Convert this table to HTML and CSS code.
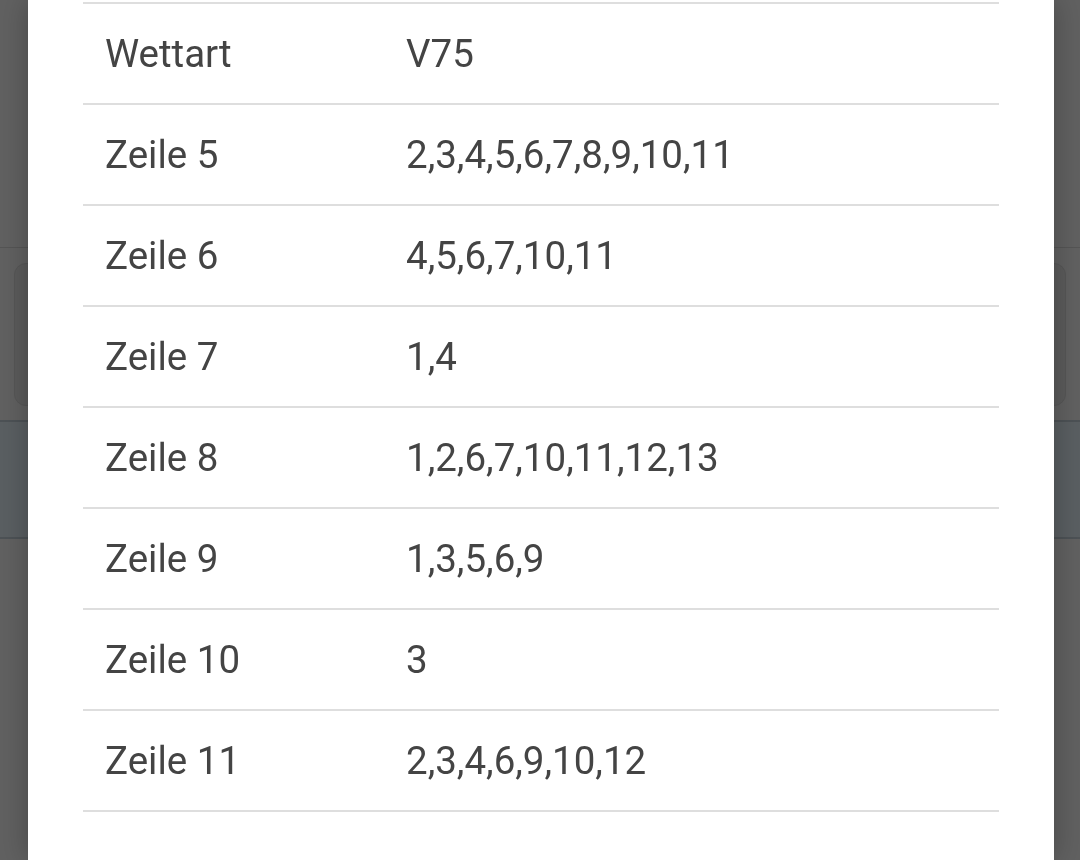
FILE: index.html
```html
<!DOCTYPE html>
<html lang="de">
<head>
<meta charset="utf-8">
<link rel="stylesheet" href="styles.css">
</head>
<body>
<div class="page">
  <div class="page-header"></div>
  <div class="page-card"></div>
  <div class="page-band"></div>
</div>
<div class="modal">
  <table class="info-table">
    <tbody>
      <tr><td class="label">Wettart</td><td class="value">V75</td></tr>
      <tr><td class="label">Zeile 5</td><td class="value">2,3,4,5,6,7,8,9,10,11</td></tr>
      <tr><td class="label">Zeile 6</td><td class="value">4,5,6,7,10,11</td></tr>
      <tr><td class="label">Zeile 7</td><td class="value">1,4</td></tr>
      <tr><td class="label">Zeile 8</td><td class="value">1,2,6,7,10,11,12,13</td></tr>
      <tr><td class="label">Zeile 9</td><td class="value">1,3,5,6,9</td></tr>
      <tr><td class="label">Zeile 10</td><td class="value">3</td></tr>
      <tr><td class="label">Zeile 11</td><td class="value">2,3,4,6,9,10,12</td></tr>
    </tbody>
  </table>
</div>
</body>
</html>
```
FILE: styles.css
```css
html, body {
  margin: 0;
  padding: 0;
  height: 100%;
  overflow: hidden;
}
body {
  background: #616161;
  font-family: Roboto, "Liberation Sans", sans-serif;
}
.page {
  display: flex;
  flex-direction: column;
}
.page-header {
  height: 247px;
  border-bottom: 1px solid #555555;
}
.page-card {
  margin: 15px 14px 0 14px;
  height: 141px;
  background: #5c5c5c;
  border: 1px solid #575757;
  border-radius: 12px;
}
.page-band {
  margin-top: 14px;
  height: 115px;
  background: #5a5f62;
  border-top: 2px solid #4d5256;
  border-bottom: 2px solid #4d5256;
}
.modal {
  position: fixed;
  top: 0;
  bottom: 0;
  left: 28px;
  width: 1026px;
  background: #ffffff;
  box-shadow: 0 0 28px rgba(0, 0, 0, 0.28);
  padding: 2px 55px 0 55px;
  box-sizing: border-box;
}
.info-table {
  width: 100%;
  border-collapse: collapse;
  border-top: 2px solid #dedede;
}
.info-table td {
  height: 99px;
  padding: 0;
  border-bottom: 2px solid #dedede;
  font-size: 38.5px;
  line-height: 44px;
  color: #444444;
  vertical-align: middle;
}
.info-table td.label {
  width: 301px;
  padding-left: 22px;
}
.info-table td.value {
  padding-left: 0;
}
```
